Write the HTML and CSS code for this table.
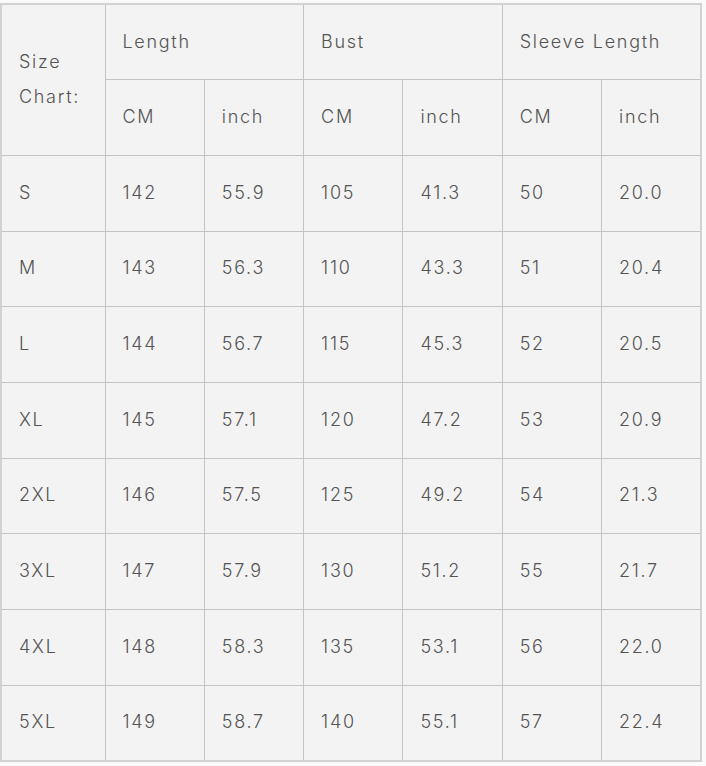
FILE: index.html
```html
<!DOCTYPE html>
<html>
<head>
<meta charset="utf-8">
<link rel="stylesheet" href="styles.css">
</head>
<body>
<table class="chart">
  <colgroup>
    <col class="c-size"><col class="c"><col class="c"><col class="c"><col class="c"><col class="c"><col class="c">
  </colgroup>
  <tr>
    <td rowspan="2" class="size-head">Size<br>Chart:</td>
    <td colspan="2">Length</td>
    <td colspan="2">Bust</td>
    <td colspan="2">Sleeve Length</td>
  </tr>
  <tr><td>CM</td><td>inch</td><td>CM</td><td>inch</td><td>CM</td><td>inch</td></tr>
  <tr><td>S</td><td>142</td><td>55.9</td><td>105</td><td>41.3</td><td>50</td><td>20.0</td></tr>
  <tr><td>M</td><td>143</td><td>56.3</td><td>110</td><td>43.3</td><td>51</td><td>20.4</td></tr>
  <tr><td>L</td><td>144</td><td>56.7</td><td>115</td><td>45.3</td><td>52</td><td>20.5</td></tr>
  <tr><td>XL</td><td>145</td><td>57.1</td><td>120</td><td>47.2</td><td>53</td><td>20.9</td></tr>
  <tr><td>2XL</td><td>146</td><td>57.5</td><td>125</td><td>49.2</td><td>54</td><td>21.3</td></tr>
  <tr><td>3XL</td><td>147</td><td>57.9</td><td>130</td><td>51.2</td><td>55</td><td>21.7</td></tr>
  <tr><td>4XL</td><td>148</td><td>58.3</td><td>135</td><td>53.1</td><td>56</td><td>22.0</td></tr>
  <tr><td>5XL</td><td>149</td><td>58.7</td><td>140</td><td>55.1</td><td>57</td><td>22.4</td></tr>
</table>
</body>
</html>
```
FILE: styles.css
```css
html, body {
  margin: 0;
  background: #fafafa;
}
body {
  padding: 3px 0 0 0;
}
.chart {
  border-collapse: collapse;
  table-layout: fixed;
  width: 700px;
  background: #f3f3f3;
  border: 2px solid #d2d2d2;
  font-family: "Inter", "Lato", sans-serif;
  font-weight: 300;
  font-size: 18px;
  letter-spacing: 1.7px;
  color: #545454;
}
.c-size { width: 104px; }
.c { width: 99.3px; }
.chart tr { height: 75.7px; }
.chart td {
  border: 1px solid #c4c4c4;
  padding: 0 0 2px 17px;
  vertical-align: middle;
  text-align: left;
  white-space: nowrap;
}
.size-head {
  line-height: 35px;
}
```
